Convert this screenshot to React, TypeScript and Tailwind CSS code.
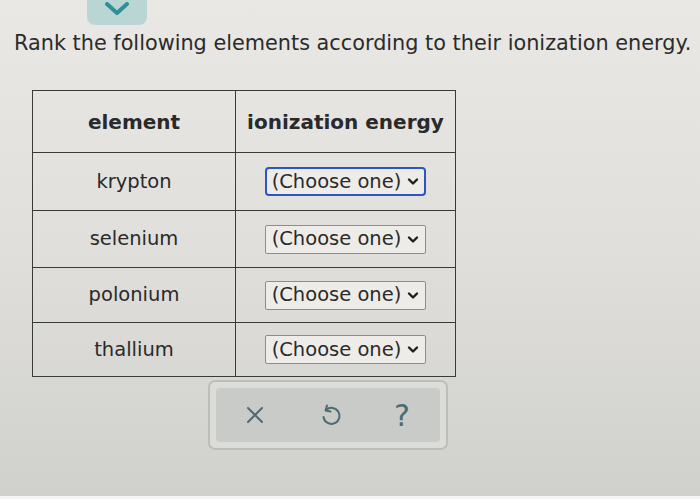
import React from "react";

const font = { fontFamily: '"DejaVu Sans", Verdana, sans-serif' };

function Chevron() {
  return (
    <svg width="12" height="9" viewBox="0 0 12 9" className="ml-[6px]">
      <path d="M2 2.5 L6 6.5 L10 2.5" fill="none" stroke="#1f1f1f" strokeWidth="2.4" strokeLinecap="round" strokeLinejoin="round" />
    </svg>
  );
}

function Select({ focused }: { focused?: boolean }) {
  return (
    <div
      className={
        focused
          ? "flex items-center h-[29px] px-[5px] rounded-[4px] border-2 border-[#2c55c4] bg-[#eeece8] text-[19.5px] text-[#2a2a2a]"
          : "flex items-center h-[29px] px-[6px] rounded-[2px] border border-[#8d8d8a] bg-[#eeece8] text-[19.5px] text-[#2a2a2a]"
      }
    >
      <span className="leading-none">(Choose one)</span>
      <Chevron />
    </div>
  );
}

const rows = [
  { name: "krypton", h: "h-[58px]", focused: true },
  { name: "selenium", h: "h-[57px]" },
  { name: "polonium", h: "h-[55px]" },
  { name: "thallium", h: "h-[53px]" },
];

export default function App() {
  return (
    <div
      className="relative w-[700px] h-[499px] overflow-hidden bg-gradient-to-b from-[#eae8e4] via-[#e0dfdb] to-[#d0d0cd]"
      style={font}
    >
      {/* top teal button */}
      <div className="absolute left-[87px] top-[-10px] w-[60px] h-[35px] rounded-b-[8px] rounded-t-[4px] bg-[#b9d6d5] flex items-end justify-center pb-[9px]">
        <svg width="26" height="14" viewBox="0 0 26 14">
          <path d="M3 2 L13 11 L23 2" fill="none" stroke="#2e8f99" strokeWidth="4" strokeLinecap="round" strokeLinejoin="round" />
        </svg>
      </div>

      <div className="pt-[30px] pl-[14px] text-[20.8px] text-[#2b2b2b] leading-[26px] whitespace-nowrap">
        Rank the following elements according to their ionization energy.
      </div>

      <div className="ml-[32px] mt-[34px] w-[424px] border-[1.5px] border-[#3a3a3a] flex flex-col text-[19.5px] text-[#2a2a2a]">
        <div className="flex h-[62px] border-b-[1.5px] border-[#3a3a3a] font-bold text-[20px]">
          <div className="w-[203px] border-r-[1.5px] border-[#3a3a3a] flex items-center justify-center">element</div>
          <div className="flex-1 flex items-center justify-center">ionization energy</div>
        </div>
        {rows.map((r, i) => (
          <div
            key={r.name}
            className={`flex ${r.h} ${i < rows.length - 1 ? "border-b-[1.5px] border-[#3a3a3a]" : ""}`}
          >
            <div className="w-[203px] border-r-[1.5px] border-[#3a3a3a] flex items-center justify-center">
              {r.name}
            </div>
            <div className="flex-1 flex items-center justify-center">
              <Select focused={r.focused} />
            </div>
          </div>
        ))}
      </div>

      {/* toolbar */}
      <div className="ml-[208px] mt-[3px] w-[240px] h-[70px] rounded-[7px] border-2 border-[#bdbdba] bg-[#dcdcd9] p-[6px]">
        <div className="w-full h-full rounded-[4px] bg-[#c9cbc8] flex items-center pl-[28px] gap-[53px]">
          <svg width="22" height="22" viewBox="0 0 22 22">
            <path d="M4 4 L18 18 M18 4 L4 18" stroke="#4c6c72" strokeWidth="2" strokeLinecap="round" />
          </svg>
          <svg width="22" height="24" viewBox="0 0 22 24">
            <path d="M7 7 A8 8 0 1 1 4.5 14" fill="none" stroke="#4c6c72" strokeWidth="2" strokeLinecap="round" />
            <path d="M8 2.5 L6.5 7.5 L11.5 8.5" fill="none" stroke="#4c6c72" strokeWidth="2" strokeLinecap="round" strokeLinejoin="round" />
          </svg>
          <span className="text-[30px] leading-none text-[#4c6c72] mt-[2px]">?</span>
        </div>
      </div>

      <div className="absolute left-0 bottom-0 w-full h-[3px] bg-[#f4f4f2]" />
    </div>
  );
}
